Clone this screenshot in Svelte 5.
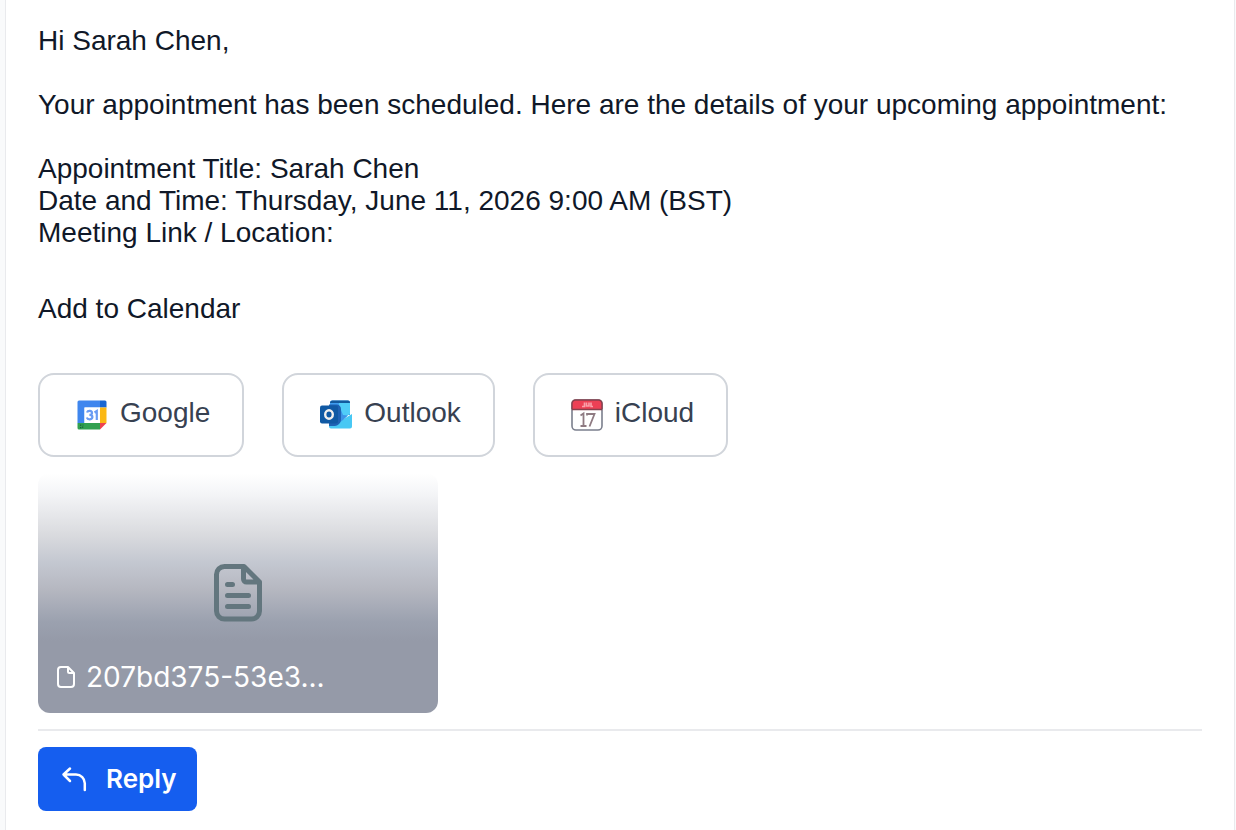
<script>
  const calendars = [
    { id: 'google', label: 'Google' },
    { id: 'outlook', label: 'Outlook' },
    { id: 'icloud', label: 'iCloud' }
  ];
</script>

<main class="message">
  <p>Hi Sarah Chen,</p>
  <p>Your appointment has been scheduled. Here are the details of your upcoming appointment:</p>
  <p class="details">
    Appointment Title: Sarah Chen<br />
    Date and Time: Thursday, June 11, 2026 9:00 AM (BST)<br />
    Meeting Link / Location:
  </p>
  <p class="add">Add to Calendar</p>

  <div class="calendars">
    {#each calendars as calendar (calendar.id)}
      <a class="calendar" href="#{calendar.id}">
        <svg viewBox="0 0 32 32" width="32" height="32" aria-hidden="true">
          {#if calendar.id === 'google'}
            <path fill="#3f86ee" d="M3 1.500H24v7H8.500V24H1.500V3A1.500 1.500 0 0 1 3 1.500z" />
            <path fill="#1967d2" d="M24 1.500h5A1.500 1.500 0 0 1 30.500 3v5.500H24z" />
            <path fill="#fbb814" d="M24 8.500h6.500V24H24z" />
            <path fill="#31a050" d="M1.500 24H24v6.500H3A1.500 1.500 0 0 1 1.500 29z" />
            <path fill="#17603a" d="M4 25.500h1.300v1.300H4zM6 27.500h1.300v1.300H6zM4 28h1.300v1.300H4zM6.500 25.500h1v1h-1z" />
            <path fill="#ee4350" d="M24 24h6.500L24 30.500z" />
            <path fill="#fff" d="M8.500 8.500H24V24H8.500z" />
            <path fill="none" stroke="#6b9cf3" stroke-width="2.200" d="M11 13.500c.8-2.400 5-2.100 5 .4 0 1.500-1.400 2-2.600 2 1.500 0 3 .5 3 2.200 0 2.700-4.700 3-5.600.4M18.500 13.500l2.300-1.500v9" />
          {:else if calendar.id === 'outlook'}
            <path fill="#3f9df0" d="M10 3.500a2 2 0 0 1 2-2h16a2 2 0 0 1 2 2V16H10z" />
            <path fill="#135a9e" d="M10 4a2.500 2.500 0 0 1 2.500-2.500H28A2 2 0 0 1 30 3.500V4z" />
            <path fill="#50ccf8" d="M19 4h11v11l-8 5-3-2z" />
            <path fill="#48c8f4" d="M32 15v12.500a2 2 0 0 1-2 2H11a2 2 0 0 1-2-2V25l13-4z" />
            <path fill="#3b94e8" d="M18 7l3 4 2 5 5 .5L23 21l-8 6H9z" />
            <path fill="#1f62b4" d="M9 5.500h8a5 5 0 0 1 4 5v10c0 3.500-3 6.500-6.500 6.500H9z" />
            <rect x="0" y="6.500" width="18" height="18" rx="2" fill="#1059a4" />
            <ellipse cx="9" cy="15.500" rx="3.800" ry="4.200" fill="none" stroke="#f2f0ee" stroke-width="2.400" />
          {:else}
            <rect x="1" y="1" width="30" height="30" rx="4" fill="#fff" stroke="#7b7f8d" stroke-width="1.600" />
            <path fill="#ed4055" d="M1 10V4.500A3.500 3.500 0 0 1 4.500 1h23A3.500 3.500 0 0 1 31 4.500V10z" />
            <path fill="none" stroke="#87404d" stroke-width="1.400" d="M.8 10.500h30.400M1 10V4.500A3.500 3.500 0 0 1 4.500 1h23A3.500 3.500 0 0 1 31 4.500V10" />
            <path fill="none" stroke="#f8a0aa" stroke-width="1.600" d="M13.500 3.500v4H11M15.500 3.500v3.500h2.500V3.500M20 3.500v4h2" />
            <path fill="none" stroke="#8f7b82" stroke-width="1.800" d="M9.500 16.500l3-2V27M9.500 27h6M16 16.500V15h7.500l-5 12.500" />
          {/if}
        </svg>
        <span>{calendar.label}</span>
      </a>
    {/each}
  </div>

  <a class="file" href="#attachment">
    <svg class="preview" viewBox="0 0 48 60" width="48" height="60" fill="none" stroke="#63767e" stroke-width="5" stroke-linecap="round" stroke-linejoin="round" aria-hidden="true">
      <path d="M30 3.500H10.500a8 8 0 0 0-8 8V48a8 8 0 0 0 8 8h27a8 8 0 0 0 8-8V19zM29.500 3.500V16a3 3 0 0 0 3 3h13M13.500 21.500h5M13.500 32.500h21M13.500 43.500h21" />
    </svg>
    <span class="name">
      <svg viewBox="0 0 20 24" width="20" height="24" fill="none" stroke="#fff" stroke-width="2" stroke-linejoin="round" aria-hidden="true">
        <path d="M12 2H5a3 3 0 0 0-3 3v14a3 3 0 0 0 3 3h10a3 3 0 0 0 3-3V8zM12 2v4.500A1.500 1.500 0 0 0 13.500 8H18" />
      </svg>
      <span>207bd375-53e3...</span>
    </span>
  </a>

  <footer>
    <button type="button">
      <svg viewBox="0 0 26 26" width="26" height="26" fill="none" stroke="#fff" stroke-width="2.500" stroke-linecap="round" stroke-linejoin="round" aria-hidden="true">
        <path d="M9 2.500L2.500 8.500 9 15M2.500 8.500H15a8.800 8.800 0 0 1 8.800 8.800V24" />
      </svg>
      <span>Reply</span>
    </button>
  </footer>
</main>

<style>
  :global(body) {
    margin: 0;
    background: #f9fafb;
  }

  .message {
    box-sizing: border-box;
    min-height: 100vh;
    margin: 0 1px 0 5px;
    padding: 25px 32px 19px;
    border: solid #e9eaed;
    border-width: 0 1px;
    background: #fff;
    color: #101828;
    font: 28px/32px "Liberation Sans", Arial, sans-serif;
  }

  p {
    margin: 0 0 32px;
  }

  .details {
    margin-bottom: 44px;
  }

  .add {
    margin-bottom: 48px;
  }

  .calendars {
    display: flex;
    flex-wrap: wrap;
    gap: 38px;
  }

  .calendar {
    display: flex;
    align-items: center;
    gap: 12px;
    box-sizing: border-box;
    height: 84px;
    padding: 0 32px 0 36px;
    border: 2px solid #d1d5db;
    border-radius: 16px;
    color: #374151;
    text-decoration: none;
  }

  .calendar span {
    padding-bottom: 4px;
  }

  .file {
    display: flex;
    flex-direction: column;
    justify-content: flex-end;
    align-items: center;
    gap: 36px;
    box-sizing: border-box;
    width: 400px;
    max-width: 100%;
    height: 240px;
    margin-top: 16px;
    padding: 0 18px 18px;
    border-radius: 12px;
    background: linear-gradient(#fff 0, #f5f6f8 8%, #d9dade 26%, #c4c8d1 37%, #b6b8c1 48%, #9ba1af 62%, #959aa8 70%);
    color: #fff;
    font-family: Inter, sans-serif;
    text-decoration: none;
  }

  .name {
    display: flex;
    align-items: center;
    align-self: stretch;
    gap: 10px;
    line-height: 36px;
  }

  footer {
    margin-top: 16px;
    padding-top: 16px;
    border-top: 2px solid #e9eaed;
  }

  button {
    display: flex;
    align-items: center;
    gap: 19px;
    height: 64px;
    padding: 0 20px 0 23px;
    border: 0;
    border-radius: 8px;
    background: #155eef;
    color: #fff;
    font: 600 26px/36px Inter, sans-serif;
  }
</style>
